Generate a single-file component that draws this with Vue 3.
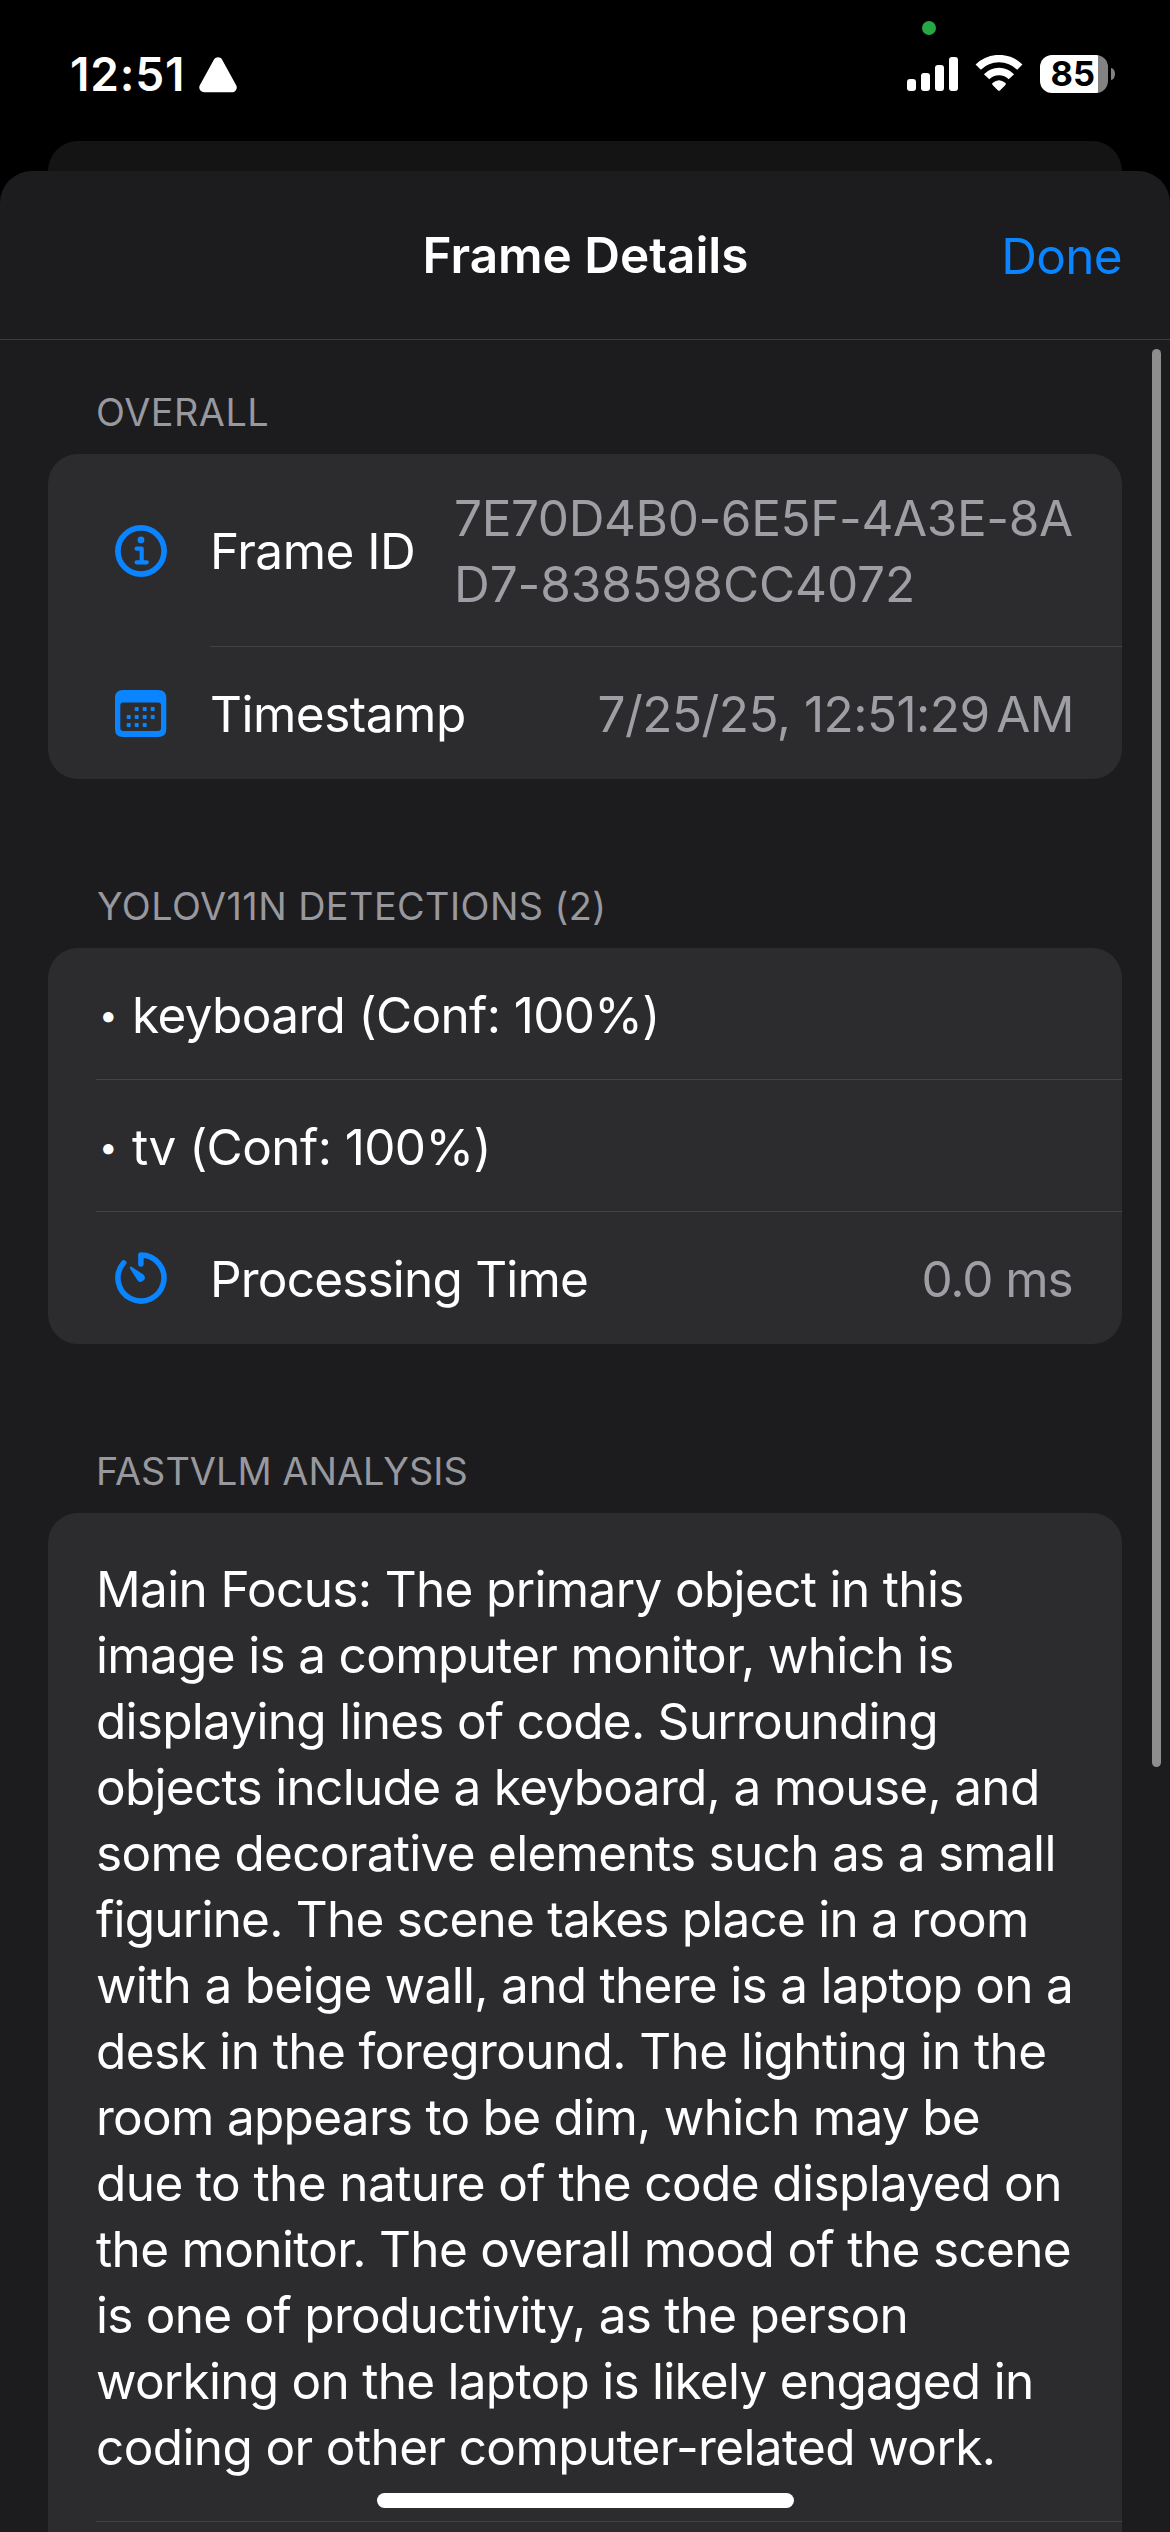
<script setup>
const bars = [12, 18, 26, 34]

const calendarDots = [
  [20, 17], [28, 17], [36, 17],
  [12, 25], [20, 25], [28, 25], [36, 25],
  [12, 33], [20, 33], [28, 33],
]

const detections = [
  { label: 'keyboard', conf: '100%', tracking: -0.643 },
  { label: 'tv', conf: '100%', tracking: -0.588 },
]

const analysis = [
  ['Main Focus: The primary object in this', -0.649],
  ['image is a computer monitor, which is', -0.677],
  ['displaying lines of code. Surrounding', -0.726],
  ['objects include a keyboard, a mouse, and', -0.702],
  ['some decorative elements such as a small', -0.707],
  ['figurine. The scene takes place in a room', -0.783],
  ['with a beige wall, and there is a laptop on a', -0.701],
  ['desk in the foreground. The lighting in the', -0.61],
  ['room appears to be dim, which may be', -0.712],
  ['due to the nature of the code displayed on', -0.598],
  ['the monitor. The overall mood of the scene', -0.664],
  ['is one of productivity, as the person', -0.735],
  ['working on the laptop is likely engaged in', -0.729],
  ['coding or other computer-related work.', -0.618],
]
</script>

<template>
  <div class="screen">
    <header class="status">
      <span class="clock">12:51</span>
      <svg class="triangle" width="38" height="36" viewBox="0 0 38 36">
        <path d="M19 5 L33 30.5 H5 Z" fill="#fff" stroke="#fff" stroke-width="9.5" stroke-linejoin="round" />
      </svg>
      <div class="cellular">
        <i v-for="h in bars" :key="h" class="bar" :style="{ height: h + 'px' }"></i>
      </div>
      <svg class="wifi" width="48" height="37" viewBox="0 0 48 37">
        <g fill="none" stroke="#fff" stroke-width="7.4">
          <path d="M3.2 12.2 A29.4 29.4 0 0 1 44.8 12.2" />
          <path d="M11.6 21.8 A17 17 0 0 1 36.4 21.8" />
        </g>
        <path d="M22.8 35.2 L17.6 30 Q16.4 28.7 17.8 27.7 Q24 22.6 30.2 27.7 Q31.6 28.7 30.4 30 L25.2 35.2 Q24 36.4 22.8 35.2 Z" fill="#fff" />
      </svg>
      <div class="battery">85</div>
      <i class="nub"></i>
      <i class="camera-dot"></i>
    </header>

    <div class="back-sheet"></div>

    <main class="sheet">
      <nav class="nav">
        <h1 class="title">Frame Details</h1>
        <a class="done">Done</a>
      </nav>

      <section class="group">
        <h2 class="heading overall">OVERALL</h2>
        <div class="card">
          <div class="row tall">
            <svg class="icon info" width="52" height="52" viewBox="0 0 52 52">
              <circle cx="26" cy="26" r="23.1" fill="none" stroke="#0a84ff" stroke-width="5.7" />
              <circle cx="26" cy="14.9" r="3.4" fill="#0a84ff" />
              <path d="M21.6 23.7 H26.7 V37.3 M21.6 37.3 H31.8" fill="none" stroke="#0a84ff" stroke-width="4.2" stroke-linecap="round" stroke-linejoin="round" />
            </svg>
            <span class="label frame-id">Frame ID</span>
            <div class="id-value">
              <div class="id-first">7E70D4B0-6E5F-4A3E-8A</div>
              <div class="id-second">D7-838598CC4072</div>
            </div>
          </div>
          <div class="divider inset"></div>
          <div class="row">
            <svg class="icon" width="52" height="48" viewBox="0 0 52 48">
              <path fill="#0a84ff" fill-rule="evenodd" d="M8 0 H43.3 Q51.3 0 51.3 8 V39 Q51.3 47 43.3 47 H8 Q0 47 0 39 V8 Q0 0 8 0 Z M8.3 12.4 Q5.3 12.4 5.3 15.4 V38 Q5.3 41 8.3 41 H43 Q46 41 46 38 V15.4 Q46 12.4 43 12.4 Z" />
              <rect v-for="[x, y] in calendarDots" :key="x + '-' + y" :x="x - 0.3" :y="y" width="4" height="4" rx="0.8" fill="#0a84ff" />
            </svg>
            <span class="label timestamp">Timestamp</span>
            <span class="value stamp">7/25/25, 12:51:29&#8239;<span class="meridiem">AM</span></span>
          </div>
        </div>
      </section>

      <section class="group">
        <h2 class="heading yolo">YOLOV11N DETECTIONS (2)</h2>
        <div class="card">
          <template v-for="d in detections" :key="d.label">
            <div class="row plain">
              <span class="bullet">•</span>
              <span :style="{ letterSpacing: d.tracking + 'px' }">{{ d.label }} (Conf: {{ d.conf }})</span>
            </div>
            <div class="divider"></div>
          </template>
          <div class="row last">
            <svg class="icon timer" width="52" height="52" viewBox="0 0 52 52">
              <path d="M25.9 12 V3 A23 23 0 1 1 8.7 10.8" fill="none" stroke="#0a84ff" stroke-width="5.5" stroke-linecap="round" stroke-linejoin="round" />
              <path d="M17 14.9 L28.6 22.8 A4.1 4.1 0 1 1 22.6 28.4 L15.1 16.7 Q14.4 15.3 15.2 14.7 Q16 14.1 17 14.9 Z" fill="#0a84ff" />
            </svg>
            <span class="label processing">Processing Time</span>
            <span class="value ms">0.0 ms</span>
          </div>
        </div>
      </section>

      <section class="group">
        <h2 class="heading fast">FASTVLM ANALYSIS</h2>
        <div class="card">
          <p class="analysis">
            <span v-for="[text, tracking] in analysis" :key="text" class="line" :style="{ letterSpacing: tracking + 'px' }">{{ text }}</span>
          </p>
          <div class="divider"></div>
          <div class="row"></div>
        </div>
      </section>

      <i class="scrollbar"></i>
    </main>

    <i class="home-indicator"></i>
  </div>
</template>

<style>
html,
body {
  background: #000;
  overflow: hidden;
}
</style>

<style scoped>
.screen {
  position: relative;
  width: 1170px;
  height: 2532px;
  overflow: hidden;
  background: #000;
  color: #fff;
  font-family: Inter, 'Liberation Sans', sans-serif;
  font-size: 49.5px;
  line-height: 66px;
  white-space: nowrap;
}
.status {
  position: relative;
  display: flex;
  align-items: flex-start;
  box-sizing: border-box;
  height: 141px;
  padding: 55px 55px 0 70px;
}
.clock {
  width: 129px;
  margin-top: -9px;
  font-size: 46px;
  line-height: 56px;
  font-weight: 600;
  letter-spacing: 0.823px;
}
.triangle {
  margin-top: 2px;
}
.cellular {
  display: flex;
  align-items: flex-end;
  gap: 5px;
  height: 36px;
  margin-left: auto;
}
.bar {
  width: 9px;
  border-radius: 3px;
  background: #fff;
}
.wifi {
  margin-left: 17px;
}
.battery {
  box-sizing: border-box;
  width: 68px;
  height: 38px;
  margin-left: 17px;
  padding-left: 10.5px;
  border-radius: 12px;
  background: linear-gradient(90deg, #fff 58px, #828282 58px);
  color: #000;
  font-size: 34.5px;
  line-height: 38px;
  font-weight: 700;
}
.nub {
  width: 4px;
  height: 12px;
  margin: 13px 0 0 3px;
  border-radius: 0 4px 4px 0 / 0 6px 6px 0;
  background: #828282;
}
.camera-dot {
  position: absolute;
  left: 922px;
  top: 21px;
  width: 14px;
  height: 14px;
  border-radius: 50%;
  background: #28a745;
}
.back-sheet {
  height: 60px;
  margin: 0 48px -30px;
  border-radius: 30px 30px 0 0;
  background: #141414;
}
.sheet {
  position: relative;
  height: 2361px;
  border-radius: 32px 32px 0 0;
  background: #1c1c1e;
}
.nav {
  display: grid;
  grid-template-columns: 1fr auto 1fr;
  align-items: start;
  box-sizing: border-box;
  height: 169px;
  padding: 54px 48px 0 49px;
  border-bottom: 1px solid #3d3d40;
  line-height: 60px;
}
.title {
  grid-column: 2;
  margin: 0;
  font-size: inherit;
  font-weight: 600;
  letter-spacing: -0.021px;
}
.done {
  justify-self: end;
  margin-top: 1px;
  color: #0a84ff;
  letter-spacing: -0.716px;
}
.group {
  padding: 49px 48px 0;
}
.group + .group {
  padding-top: 104px;
}
.heading {
  margin: 0 0 19px;
  padding-left: 48px;
  color: #98989f;
  font-size: 37.8px;
  line-height: 46px;
  font-weight: 400;
}
.overall {
  letter-spacing: 0.517px;
}
.yolo {
  letter-spacing: 0.445px;
  padding-left: 49px;
}
.fast {
  letter-spacing: 0.059px;
}
.card {
  border-radius: 30px;
  background: #2c2c2e;
}
.row {
  display: flex;
  align-items: center;
  box-sizing: border-box;
  height: 132px;
  padding: 2px 48px 0 67px;
}
.row.tall {
  height: 192px;
}
.row.plain {
  height: 131px;
  padding-top: 3px;
  padding-left: 48px;
}
.icon {
  flex: none;
  width: 52px;
  margin-top: -1px;
}
.icon.info {
  margin-top: 0;
}
.icon.timer {
  margin-top: -2px;
}
.label {
  margin-left: 43px;
}
.frame-id {
  letter-spacing: -0.52px;
}
.timestamp {
  letter-spacing: -0.485px;
}
.processing {
  letter-spacing: -0.808px;
}
.value,
.id-value {
  margin-left: auto;
  color: #9e9ea5;
}
.id-value {
  width: 620px;
}
.id-first {
  letter-spacing: -0.385px;
}
.id-second {
  letter-spacing: -0.093px;
}
.stamp {
  letter-spacing: -0.52px;
}
.meridiem {
  margin-left: -2px;
}
.ms {
  letter-spacing: -1.097px;
  margin-right: 1.5px;
}
.bullet {
  box-sizing: border-box;
  width: 36px;
  padding-left: 3px;
  font-size: 33px;
}
.divider {
  height: 1px;
  margin-left: 48px;
  background: #434346;
}
.divider.inset {
  margin-left: 162px;
}
.analysis {
  margin: 0;
  padding: 43px 0 41px 48px;
}
.line {
  display: block;
}
.scrollbar {
  position: absolute;
  left: 1152px;
  top: 178px;
  width: 9px;
  height: 1418px;
  border-radius: 4.5px;
  background: #8e8e8e;
}
.home-indicator {
  position: absolute;
  left: 377px;
  top: 2493px;
  width: 417px;
  height: 15px;
  border-radius: 7.5px;
  background: #fff;
}
</style>
